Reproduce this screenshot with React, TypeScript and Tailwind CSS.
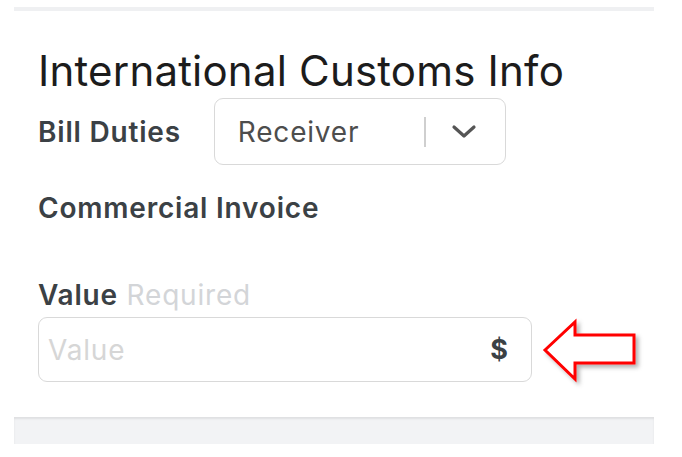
import React from "react";

export default function App() {
  return (
    <div className="relative w-[682px] h-[457px] bg-white overflow-hidden" style={{ fontFamily: "Inter, 'Noto Sans', sans-serif" }}>
      <div className="ml-[14px] mt-[7px] w-[640px] flex flex-col">
        <div className="h-[4px] bg-[#eff0f2]" />
        <div className="bg-white pl-[24px] pt-[35px] pb-[35px] flex flex-col">
          <h1 className="text-[42px] leading-[50px] font-normal text-[#1c1c1c] tracking-[0.2px]">International Customs Info</h1>
          <div className="mt-[2px] flex items-center gap-[33px]">
            <span className="text-[28px] leading-[32px] font-semibold text-[#3b4145] tracking-[0.8px]">Bill Duties</span>
            <div className="w-[292px] h-[67px] border-[1.5px] border-[#d9d9d9] rounded-[9px] flex items-center pl-[23px] pr-[28px]">
              <span className="flex-1 text-[28px] leading-[32px] text-[#4d4d4d] tracking-[0.8px]">Receiver</span>
              <div className="w-[1.5px] h-[30px] bg-[#cfcfcf] mr-[25px]" />
              <svg width="26" height="16" viewBox="0 0 26 16" fill="none">
                <path d="M3 3 L13 12 L23 3" stroke="#555" strokeWidth="3.2" strokeLinecap="round" strokeLinejoin="round" />
              </svg>
            </div>
          </div>
          <div className="mt-[27px] text-[28px] leading-[32px] font-semibold text-[#3b4145] tracking-[0.8px]">Commercial Invoice</div>
          <div className="mt-[55px] text-[28px] leading-[32px] tracking-[0.8px]">
            <span className="font-semibold text-[#3b4145]">Value</span>{" "}
            <span className="text-[#d3d5d8]">Required</span>
          </div>
          <div className="mt-[6px] w-[494px] h-[65px] border-[1.5px] border-[#d9d9d9] rounded-[9px] flex items-center pl-[9px] pr-[23px]">
            <span className="flex-1 text-[28px] leading-[32px] text-[#d6d6d6] tracking-[0.8px]">Value</span>
            <span className="text-[27px] leading-[32px] font-bold text-[#3b4145]">$</span>
          </div>
        </div>
        <div className="h-[27px] bg-[#f2f3f5] shadow-[inset_0_2px_2px_rgba(0,0,0,0.08)]" />
      </div>
      <svg className="absolute left-[538px] top-[315px]" width="110" height="75" viewBox="538 315 110 75">
        <defs>
          <filter id="sh" x="-20%" y="-20%" width="150%" height="150%">
            <feDropShadow dx="3" dy="3" stdDeviation="2" floodColor="#000" floodOpacity="0.3" />
          </filter>
        </defs>
        <polygon
          points="545,350 575,322 575,335 634,335 634,363 575,363 575,379"
          fill="#fff"
          stroke="#ff0000"
          strokeWidth="3"
          strokeLinejoin="miter"
          filter="url(#sh)"
        />
      </svg>
    </div>
  );
}
